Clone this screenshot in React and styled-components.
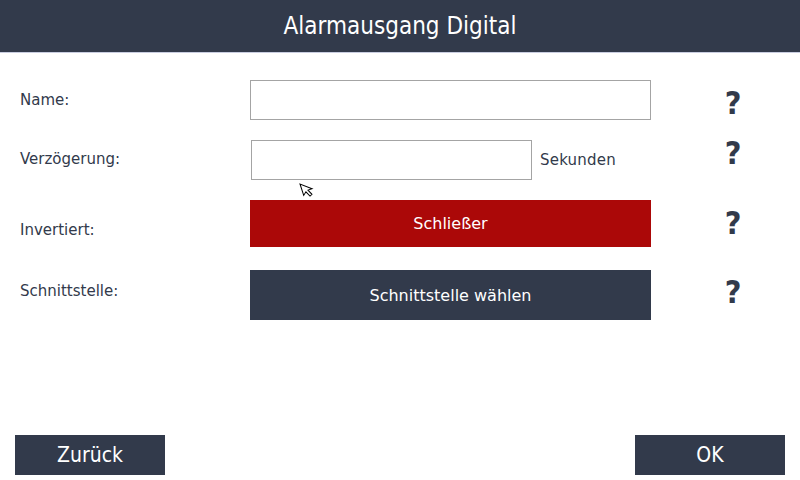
import styled, { createGlobalStyle } from "styled-components";

const GlobalStyle = createGlobalStyle`
  html, body {
    margin: 0;
    padding: 0;
    background: #ffffff;
  }
  body {
    font-family: "DejaVu Sans", "Liberation Sans", sans-serif;
  }
`;

const Screen = styled.div`
  width: 800px;
  height: 480px;
  position: relative;
  overflow: hidden;
  display: flex;
  flex-direction: column;
  background: #ffffff;
`;

const Header = styled.div`
  height: 52px;
  background: #323a4b;
  border-bottom: 1px solid #c9cde0;
  display: flex;
  align-items: center;
  justify-content: center;
  color: #ffffff;
  font-family: "DejaVu Sans Condensed", "DejaVu Sans", sans-serif;
  font-size: 24px;
`;

const Form = styled.div`
  display: flex;
  flex-direction: column;
  padding-top: 27px;
  flex: 1;
`;

const Row = styled.div`
  display: flex;
  align-items: flex-start;
  height: ${({ h }) => h}px;
  margin-top: ${({ gap }) => gap}px;
  & > * {
    flex: none;
  }
`;

const Label = styled.div`
  width: 250px;
  padding-left: 20px;
  box-sizing: border-box;
  font-size: 15px;
  color: #323a4b;
  height: 100%;
  display: flex;
  align-items: center;
  margin-top: ${({ shift }) => shift || 0}px;
`;

const Control = styled.div`
  width: 401px;
  display: flex;
  align-items: center;
  gap: 8px;
`;

const TextInput = styled.div`
  box-sizing: border-box;
  width: ${({ w }) => w}px;
  height: 40px;
  margin-left: ${({ ml }) => ml || 0}px;
  border: 1px solid #a4a4a4;
  background: #ffffff;
`;

const Unit = styled.span`
  font-size: 15px;
  color: #323a4b;
  letter-spacing: 0.2px;
`;

const WideButton = styled.div`
  width: 401px;
  height: 100%;
  background: ${({ red }) => (red ? "#ab0808" : "#323a4b")};
  color: #ffffff;
  font-size: 16px;
  display: flex;
  align-items: center;
  justify-content: center;
  padding-bottom: ${({ lift }) => lift || 0}px;
  box-sizing: border-box;
`;

const Help = styled.div`
  width: 164px;
  height: 40px;
  text-align: center;
  font-family: "DejaVu Sans Condensed", "DejaVu Sans", sans-serif;
  font-weight: bold;
  font-size: 32px;
  color: #323a4b;
  line-height: 40px;
  margin-top: ${({ shift }) => shift || 0}px;
`;

const Footer = styled.div`
  display: flex;
  justify-content: space-between;
  padding: 0 15px 5px;
`;

const FooterButton = styled.div`
  width: 150px;
  height: 40px;
  background: #323a4b;
  color: #ffffff;
  font-family: "DejaVu Sans Condensed", "DejaVu Sans", sans-serif;
  font-size: 21px;
  display: flex;
  align-items: center;
  justify-content: center;
`;

const Cursor = styled.svg`
  position: absolute;
  left: 297px;
  top: 181px;
`;

export default function App() {
  return (
    <Screen>
      <GlobalStyle />
      <Header>Alarmausgang Digital</Header>
      <Form>
        <Row h={40} gap={0}>
          <Label>Name:</Label>
          <Control>
            <TextInput w={401} />
          </Control>
          <Help shift={3}>?</Help>
        </Row>
        <Row h={40} gap={20}>
          <Label shift={-1}>Verzögerung:</Label>
          <Control>
            <TextInput w={281} ml={1} />
            <Unit>Sekunden</Unit>
          </Control>
          <Help shift={-7}>?</Help>
        </Row>
        <Row h={47} gap={20}>
          <Label shift={6}>Invertiert:</Label>
          <WideButton red lift={1}>Schließer</WideButton>
          <Help shift={3}>?</Help>
        </Row>
        <Row h={50} gap={23}>
          <Label shift={-4}>Schnittstelle:</Label>
          <WideButton>Schnittstelle wählen</WideButton>
          <Help shift={2}>?</Help>
        </Row>
      </Form>
      <Footer>
        <FooterButton>Zurück</FooterButton>
        <FooterButton>OK</FooterButton>
      </Footer>
      <Cursor width="20" height="20" viewBox="0 0 20 20">
        <path
          d="M3 3 L3 15 L6.2 12.3 L8.8 17.6 L11.2 16.5 L8.7 11.3 L13 11.3 Z"
          fill="#ffffff"
          stroke="#000000"
          strokeWidth="1"
          transform="rotate(-18 3 3)"
        />
      </Cursor>
    </Screen>
  );
}
